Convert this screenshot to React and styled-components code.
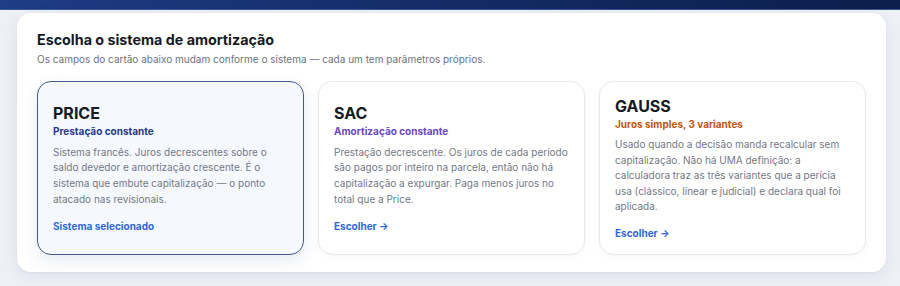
import React from "react";
import styled, { createGlobalStyle } from "styled-components";

const GlobalStyle = createGlobalStyle`
  html, body { margin: 0; padding: 0; }
  body {
    background: #edf0f5;
    font-family: Inter, "Noto Sans", Arial, sans-serif;
    -webkit-font-smoothing: antialiased;
  }
`;

const TopBar = styled.div`
  height: 9px;
  background: linear-gradient(90deg, #1f3d86 0%, #142c66 50%, #0c1e4b 100%);
  border-bottom: 1px solid #3a5694;
`;

const Main = styled.main`
  padding: 3px 14px 14px 17px;
`;

const Panel = styled.section`
  background: #ffffff;
  border-radius: 14px;
  padding: 18px 20px 17px;
  box-shadow: 0 4px 18px rgba(30, 45, 80, 0.07), 0 1px 3px rgba(30, 45, 80, 0.05);
`;

const Heading = styled.h2`
  margin: 0;
  font-size: 14.3px;
  line-height: 18px;
  font-weight: 700;
  color: #151a23;
`;

const Lead = styled.p`
  margin: 3px 0 0;
  font-size: 10px;
  line-height: 14px;
  color: #6b7280;
`;

const Grid = styled.div`
  margin-top: 15px;
  display: grid;
  grid-template-columns: repeat(3, 1fr);
  gap: 14px;
`;

const Card = styled.div`
  display: flex;
  flex-direction: column;
  justify-content: center;
  padding: 13.5px 15px 14px;
  border-radius: 14px;
  border: 1px solid ${(p) => (p.$selected ? "#41598f" : "#e6e8ec")};
  background: ${(p) => (p.$selected ? "#f5f8fe" : "#ffffff")};
  box-shadow: ${(p) =>
    p.$selected
      ? "0 6px 16px rgba(30, 58, 138, 0.10)"
      : "0 2px 6px rgba(20, 30, 60, 0.03)"};
`;

const Title = styled.h3`
  margin: 0;
  font-size: 16px;
  line-height: 20px;
  font-weight: 700;
  color: #151a23;
`;

const Tagline = styled.div`
  margin-top: 1px;
  font-size: 10px;
  line-height: 14px;
  font-weight: 700;
  color: ${(p) => p.$color};
`;

const Body = styled.p`
  margin: 6.5px 0 0;
  font-size: 10px;
  line-height: 15.6px;
  color: #737985;
`;

const Action = styled.a`
  margin-top: 11.5px;
  font-size: 10px;
  line-height: 14px;
  font-weight: 700;
  color: #2f68d6;
  text-decoration: none;
  cursor: pointer;
`;

const systems = [
  {
    key: "price",
    title: "PRICE",
    tagline: "Prestação constante",
    color: "#1f3a8a",
    body:
      "Sistema francês. Juros decrescentes sobre o saldo devedor e amortização crescente. É o sistema que embute capitalização — o ponto atacado nas revisionais.",
    selected: true,
  },
  {
    key: "sac",
    title: "SAC",
    tagline: "Amortização constante",
    color: "#6b48be",
    body:
      "Prestação decrescente. Os juros de cada período são pagos por inteiro na parcela, então não há capitalização a expurgar. Paga menos juros no total que a Price.",
  },
  {
    key: "gauss",
    title: "GAUSS",
    tagline: "Juros simples, 3 variantes",
    color: "#c0560e",
    body:
      "Usado quando a decisão manda recalcular sem capitalização. Não há UMA definição: a calculadora traz as três variantes que a perícia usa (clássico, linear e judicial) e declara qual foi aplicada.",
  },
];

export default function App() {
  return (
    <>
      <GlobalStyle />
      <TopBar />
      <Main>
        <Panel>
          <Heading>Escolha o sistema de amortização</Heading>
          <Lead>
            Os campos do cartão abaixo mudam conforme o sistema — cada um tem parâmetros próprios.
          </Lead>
          <Grid>
            {systems.map((s) => (
              <Card key={s.key} $selected={s.selected}>
                <Title>{s.title}</Title>
                <Tagline $color={s.color}>{s.tagline}</Tagline>
                <Body>{s.body}</Body>
                <Action>{s.selected ? "Sistema selecionado" : "Escolher →"}</Action>
              </Card>
            ))}
          </Grid>
        </Panel>
      </Main>
    </>
  );
}
